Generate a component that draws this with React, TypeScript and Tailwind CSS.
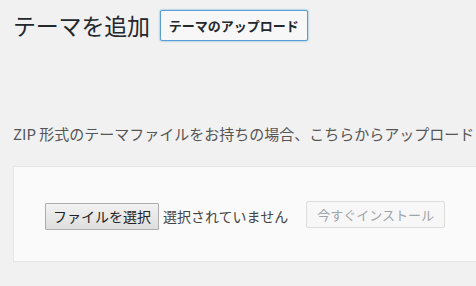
import React from "react";

const jp = "font-['Meiryo','Noto_Sans_CJK_JP',sans-serif]";

const App = () => {
  return (
    <div
      className={`h-[286px] w-[476px] overflow-hidden bg-[#f1f1f1] pl-[13px] pt-[10px] text-[#23282d] ${jp}`}
    >
      <div className="flex h-[31px] items-center">
        <h1 className="text-[23px] leading-[31px] font-normal tracking-[-0.2px]">
          テーマを追加
        </h1>
        <button className="ml-[10px] h-[31px] rounded-[2px] border border-[#5b9dd9] bg-[#f7f7f7] px-[8px] text-[13px] leading-[29px] font-semibold text-[#23282d] shadow-[0_0_2px_rgba(30,140,190,0.8)]">
          テーマのアップロード
        </button>
      </div>

      <p className="mt-[83px] whitespace-nowrap text-[15px] leading-[20px] text-[#555]">
        ZIP 形式のテーマファイルをお持ちの場合、こちらからアップロード
      </p>

      <div className="mt-[22px] flex h-[96px] w-[520px] items-center border border-[#e5e5e5] bg-[#fafafa] pl-[31px]">
        <div className="mt-[4px] flex items-center">
          <button className="h-[27px] rounded-[1px] border border-[#adadad] bg-gradient-to-b from-[#f2f2f2] to-[#dedede] px-[7px] text-[14px] leading-[25px] text-[#222]">
            ファイルを選択
          </button>
          <span className="ml-[4px] text-[14px] leading-[27px] text-[#444]">
            選択されていません
          </span>
        </div>
        <button
          disabled
          className="ml-[18px] h-[27px] rounded-[2px] border border-[#ddd] bg-[#f7f7f7] px-[10px] text-[13px] leading-[25px] text-[#a0a5aa]"
        >
          今すぐインストール
        </button>
      </div>
    </div>
  );
};

export default App;
